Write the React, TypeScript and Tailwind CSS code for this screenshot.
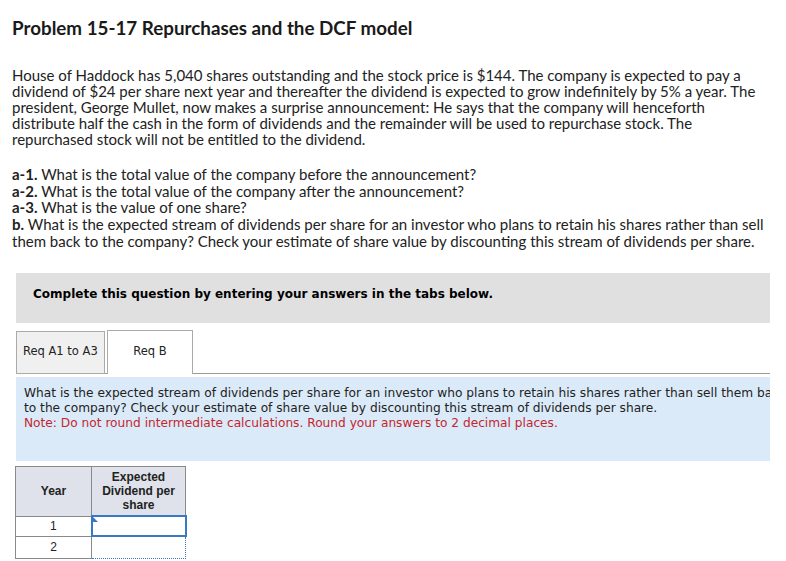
import type { ReactNode } from 'react';

const proxima = { fontFamily: 'Lato, "Open Sans", sans-serif' };
const verdana = { fontFamily: '"DejaVu Sans", Verdana, sans-serif' };
const arial = { fontFamily: '"Liberation Sans", Arial, sans-serif' };

function Question({ label, children }: { label: string; children: ReactNode }) {
  return (
    <p>
      <b className="font-bold">{label}</b> {children}
    </p>
  );
}

export default function App() {
  return (
    <div className="h-[561px] w-[786px] overflow-hidden bg-white text-[#222]">
      <div className="px-3 pt-[17px]" style={proxima}>
        <h1 className="text-[18.8px] font-bold leading-[22px] text-[#1a1a1a]">
          Problem 15-17 Repurchases and the DCF model
        </h1>
        <p className="mt-[28px] text-[15px] leading-[16px]">
          House of Haddock has 5,040 shares outstanding and the stock price is $144. The company is expected to pay a
          <br />
          dividend of $24 per share next year and thereafter the dividend is expected to grow indefinitely by 5% a year. The
          <br />
          president, George Mullet, now makes a surprise announcement: He says that the company will henceforth
          <br />
          distribute half the cash in the form of dividends and the remainder will be used to repurchase stock. The
          <br />
          repurchased stock will not be entitled to the dividend.
        </p>
        <div className="mt-[19px] text-[15px] leading-[16.7px]">
          <Question label="a-1.">What is the total value of the company before the announcement?</Question>
          <Question label="a-2.">What is the total value of the company after the announcement?</Question>
          <Question label="a-3.">What is the value of one share?</Question>
          <Question label="b.">
            What is the expected stream of dividends per share for an investor who plans to retain his shares rather than
            sell them back to the company? Check your estimate of share value by discounting this stream of dividends per
            share.
          </Question>
        </div>
      </div>

      <div className="mx-4 mt-[23px] h-[50px] bg-[#e0e0e0] pl-[17px] pt-[13px]" style={verdana}>
        <p className="text-[12px] font-bold leading-[16px] text-black">
          Complete this question by entering your answers in the tabs below.
        </p>
      </div>

      <div className="mx-4 mt-[8px] flex h-[43px] items-end border-b border-[#9a9a9a]" style={verdana}>
        <div className="-mb-px flex h-[43px] w-[89px] items-center border border-[#aaa] bg-[#f0f0f0] pl-[6px] text-[11.5px] text-[#222]">
          Req A1 to A3
        </div>
        <div className="-mb-px ml-[2px] flex h-[44px] w-[86px] items-center justify-center border border-b-0 border-[#aaa] bg-white text-[11.5px] text-[#222]">
          Req B
        </div>
      </div>

      <div className="mx-4 mt-[3px] h-[84px] overflow-hidden bg-[#dbeaf8] pl-2 pt-[9px]" style={verdana}>
        <div className="w-[800px] text-[12.2px] leading-[15px]">
          <p className="whitespace-nowrap text-[#222]">
            What is the expected stream of dividends per share for an investor who plans to retain his shares rather than sell them back
            <br />
            to the company? Check your estimate of share value by discounting this stream of dividends per share.
          </p>
          <p className="text-[#c4262e]">Note: Do not round intermediate calculations. Round your answers to 2 decimal places.</p>
        </div>
      </div>

      <table className="ml-[15px] mt-[5px] border-collapse text-[12px] text-[#222]" style={arial}>
        <thead>
          <tr className="h-[50px] bg-[#dfe2ea]">
            <th className="w-[76px] border border-[#8a8a8a] font-bold leading-[14px]">Year</th>
            <th className="w-[94px] border border-[#8a8a8a] px-1 font-bold leading-[14px]">
              Expected
              <br />
              Dividend per
              <br />
              share
            </th>
          </tr>
        </thead>
        <tbody>
          <tr className="h-[20px]">
            <td className="border border-[#8a8a8a] text-center">1</td>
            <td className="relative border-2 border-[#3a78c3] p-0">
              <span className="absolute left-0 top-0 h-0 w-0 border-l-[5px] border-t-[5px] border-l-[#3a78c3] border-t-transparent" />
              <div className="h-[16px]" />
            </td>
          </tr>
          <tr className="h-[22px]">
            <td className="border border-[#8a8a8a] text-center">2</td>
            <td className="border border-dotted border-[#3a78c3] p-0" />
          </tr>
        </tbody>
      </table>
    </div>
  );
}
